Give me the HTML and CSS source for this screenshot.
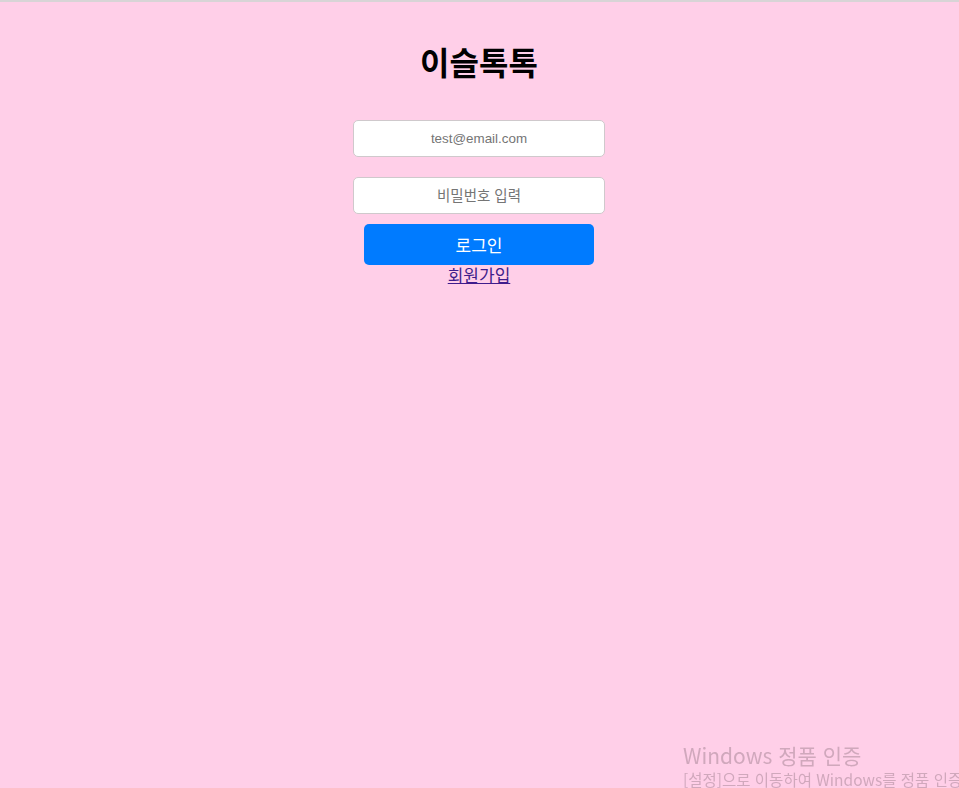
FILE: index.html
```html
<!DOCTYPE html>
<html lang="ko">
<head>
<meta charset="utf-8">
<title>이슬톡톡</title>
<link rel="stylesheet" href="styles.css">
</head>
<body>
<div class="topline"></div>
<main class="page">
  <h1 class="title">이슬톡톡</h1>
  <form class="form">
    <input class="field" type="email" placeholder="test@email.com">
    <input class="field field-pw" type="password" placeholder="비밀번호 입력">
    <button class="btn" type="button">로그인</button>
    <a class="link" href="#">회원가입</a>
  </form>
</main>
<div class="watermark">
  <div class="wm1">Windows 정품 인증</div>
  <div class="wm2">[설정]으로 이동하여 Windows를 정품 인증</div>
</div>
</body>
</html>
```

FILE: styles.css
```css
html, body {
  margin: 0;
  padding: 0;
  height: 100%;
  overflow: hidden;
}
body {
  background: #ffcfe8;
  font-family: "Liberation Sans", Arial, "Noto Sans CJK KR", sans-serif;
}
.topline {
  height: 2px;
  background: #d8d4d6;
}
.page {
  display: flex;
  flex-direction: column;
  align-items: center;
  padding-right: 1px;
}
.title {
  font-family: "Noto Sans CJK KR", sans-serif;
  font-weight: 700;
  font-size: 32px;
  line-height: 40px;
  margin: 39px 0 39px;
  color: #000;
}
.form {
  display: flex;
  flex-direction: column;
  align-items: center;
}
.field {
  box-sizing: border-box;
  width: 252px;
  height: 37px;
  border: 1px solid #cfc9cc;
  border-radius: 5px;
  background: #fff;
  text-align: center;
  font-size: 13.4px;
  font-family: "Liberation Sans", Arial, "Noto Sans CJK KR", sans-serif;
  padding: 0 8px;
  outline: none;
}
.field::placeholder {
  color: #757575;
}
.field-pw {
  margin-top: 20px;
  font-size: 14.5px;
}
.btn {
  margin-top: 10px;
  width: 230px;
  height: 41px;
  border: none;
  border-radius: 5px;
  background: #007bff;
  color: #fff;
  font-size: 17px;
  font-family: "Noto Sans CJK KR", sans-serif;
  cursor: pointer;
}
.link {
  font-family: "Noto Sans CJK KR", sans-serif;
  font-size: 17px;
  line-height: 20px;
  color: #3f1d8c;
  text-decoration: underline;
}
.watermark {
  position: fixed;
  left: 683px;
  top: 742px;
  white-space: nowrap;
  color: rgba(150, 120, 135, 0.45);
  font-family: "Noto Sans CJK KR", sans-serif;
}
.wm1 {
  font-size: 21px;
  line-height: 27px;
}
.wm2 {
  font-size: 15.5px;
  line-height: 20px;
}
```
